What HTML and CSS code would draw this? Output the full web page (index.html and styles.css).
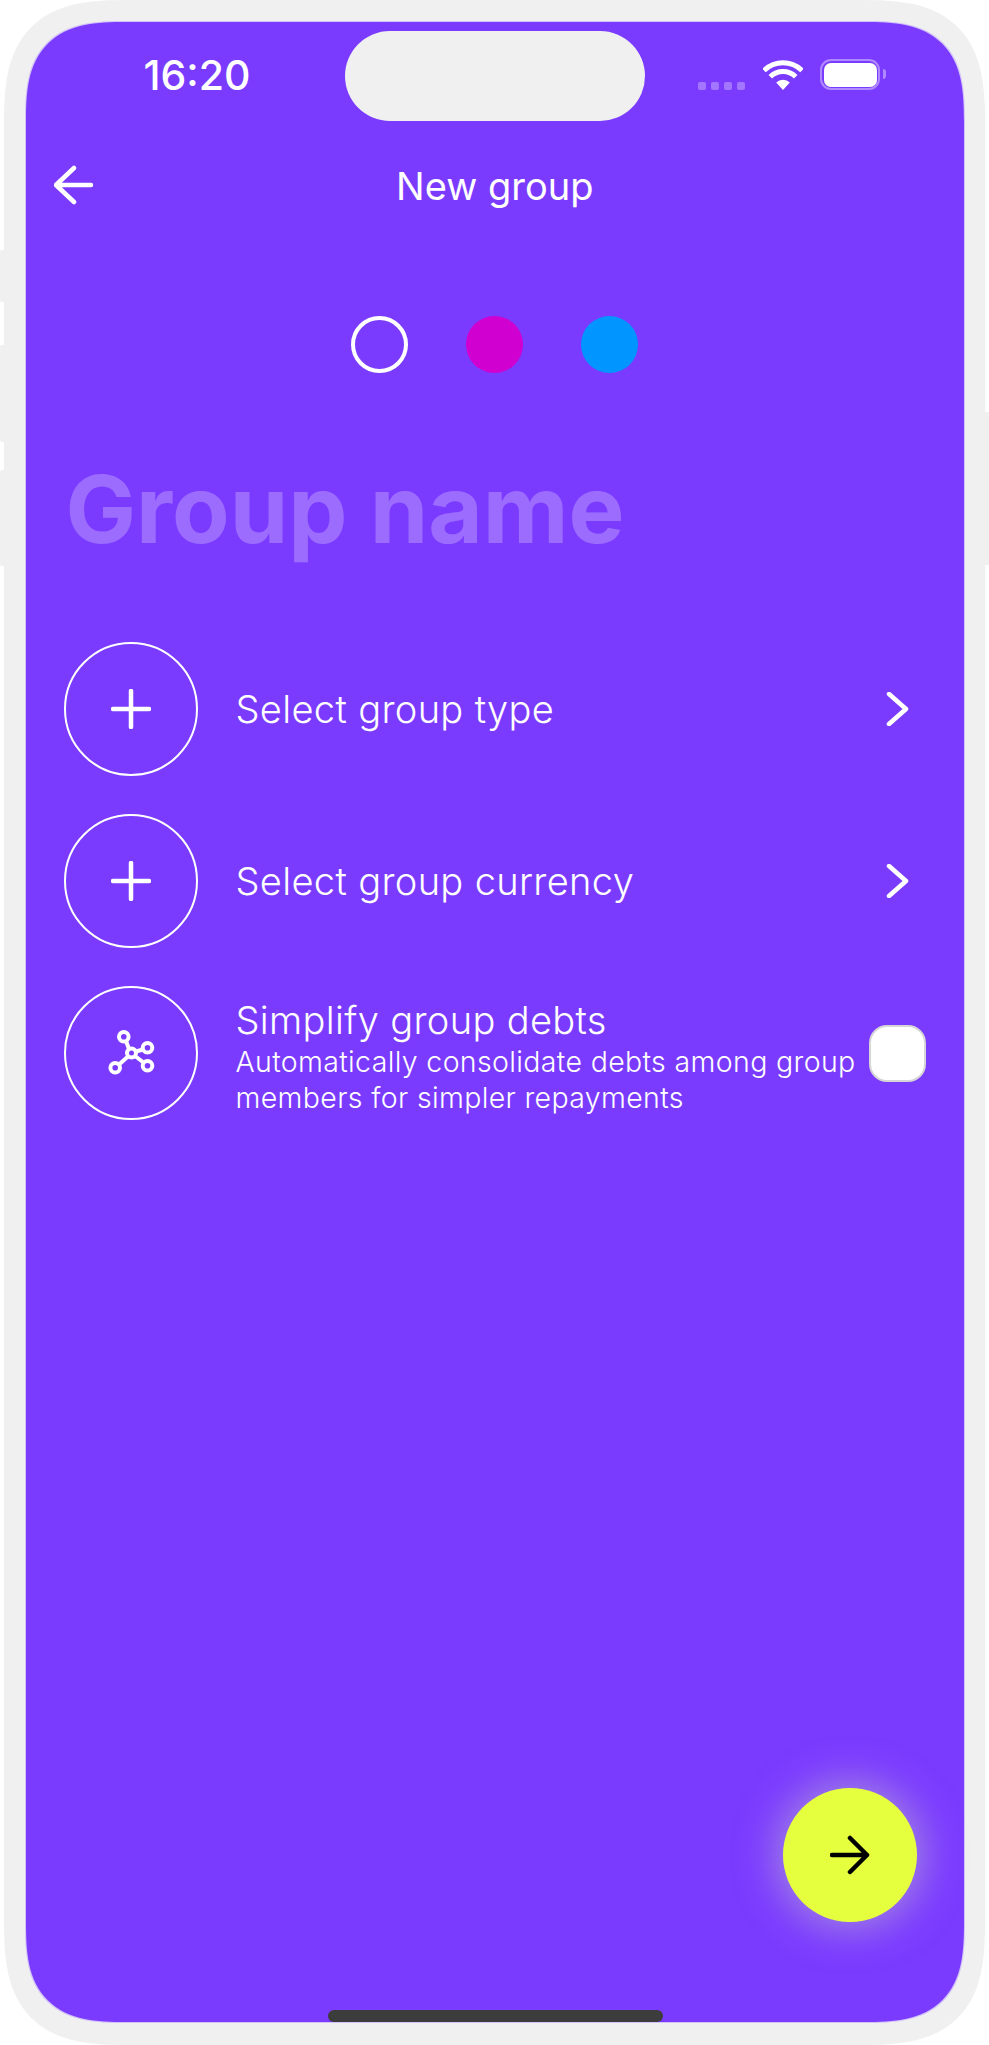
FILE: index.html
```html
<!DOCTYPE html>
<html lang="en">

<head>
  <meta charset="UTF-8" />
  <meta name="viewport" content="width=device-width, initial-scale=1" />
  <title>New group</title>
  <link rel="stylesheet" href="styles.css">
</head>

<body>
  <div class="phone">
    <span class="side-btn btn-mute"></span>
    <span class="side-btn btn-up"></span>
    <span class="side-btn btn-down"></span>
    <span class="side-btn btn-power"></span>

    <div class="screen">
      <div class="status-bar">
        <span class="time">16:20</span>
        <div class="island"></div>
        <div class="status-icons">
          <div class="signal"><i></i><i></i><i></i><i></i></div>
          <svg class="wifi" viewBox="0 0 40 31" fill="none">
            <path d="M1 11.5A27 27 0 0 1 39 11.5M7.3 17.8A18 18 0 0 1 32.7 17.8" stroke="#fff" stroke-width="5" />
            <path d="M20 31L13.2 23.6A9.6 9.6 0 0 1 26.8 23.6Z" fill="#fff" />
          </svg>
          <div class="battery"><div class="battery-level"></div></div>
        </div>
      </div>

      <div class="header">
        <svg class="back" viewBox="0 0 40 40" fill="none">
          <path d="M2 20H37M20 3L2 20L20 37" stroke="#fff" stroke-width="4.5" stroke-linecap="round" stroke-linejoin="round" />
        </svg>
        <h1>New group</h1>
      </div>

      <div class="colors">
        <span class="color color-selected"></span>
        <span class="color color-magenta"></span>
        <span class="color color-blue"></span>
      </div>

      <div class="group-name">Group name</div>

      <div class="rows">
        <div class="row">
          <div class="row-icon">
            <svg class="plus" viewBox="0 0 40 40" fill="none">
              <path d="M20 2V38M2 20H38" stroke="#fff" stroke-width="4.5" stroke-linecap="round" />
            </svg>
          </div>
          <div class="row-title">Select group type</div>
          <svg class="chevron" viewBox="0 0 24 34" fill="none">
            <path d="M3 2L20 17L3 32" stroke="#fff" stroke-width="4.5" stroke-linecap="round" stroke-linejoin="round" />
          </svg>
        </div>

        <div class="row">
          <div class="row-icon">
            <svg class="plus" viewBox="0 0 40 40" fill="none">
              <path d="M20 2V38M2 20H38" stroke="#fff" stroke-width="4.5" stroke-linecap="round" />
            </svg>
          </div>
          <div class="row-title">Select group currency</div>
          <svg class="chevron" viewBox="0 0 24 34" fill="none">
            <path d="M3 2L20 17L3 32" stroke="#fff" stroke-width="4.5" stroke-linecap="round" stroke-linejoin="round" />
          </svg>
        </div>

        <div class="row">
          <div class="row-icon">
            <svg class="network" viewBox="0 0 50 50" fill="none" stroke="#fff" stroke-width="4">
              <circle cx="25.5" cy="25" r="4.5" />
              <circle cx="17.8" cy="8.7" r="4.8" />
              <circle cx="41.5" cy="19.7" r="4.8" />
              <circle cx="41.5" cy="37.7" r="4.8" />
              <circle cx="9.2" cy="39.7" r="4.8" />
              <path d="M20 13L23 21M30 23.5L37 21.5M29 28L37.5 34.5M22 28.5L13 36.5" />
            </svg>
          </div>
          <div class="row-body">
            <div class="row-title">Simplify group debts</div>
            <div class="row-sub">Automatically consolidate debts among group<br>members for simpler repayments</div>
          </div>
          <div class="checkbox"></div>
        </div>
      </div>

      <div class="spacer"></div>

      <div class="footer">
        <div class="fab">
          <svg class="fab-arrow" viewBox="0 0 40 40" fill="none">
            <path d="M2 20H37M20 3L37 20L20 37" stroke="#000" stroke-width="4.5" stroke-linecap="round" stroke-linejoin="round" />
          </svg>
        </div>
      </div>

      <div class="home-indicator"></div>
    </div>
  </div>
</body>

</html>
```

FILE: styles.css
```css
* {
  margin: 0;
  padding: 0;
  box-sizing: border-box;
}

body {
  font-family: 'Inter', sans-serif;
  background-color: #fff;
  color: #fff;
  width: 989px;
  height: 2045px;
  padding: 0 4px;
  overflow: hidden;
}

.phone {
  position: relative;
  width: 981px;
  height: 2045px;
  padding: 22px 21px 23px 21.5px;
  background-color: #f0f0f0;
  border-radius: 125px;
  corner-shape: superellipse(1.5);
}

.side-btn {
  position: absolute;
  width: 6px;
  background-color: #f0f0f0;
  border-radius: 2px;
}

.btn-mute { left: -4px; top: 250px; height: 52px; }
.btn-up { left: -4px; top: 345px; height: 97px; }
.btn-down { left: -4px; top: 470px; height: 96px; }
.btn-power { right: -4px; top: 412px; height: 153px; }

.screen {
  position: relative;
  display: flex;
  flex-direction: column;
  height: 100%;
  background-color: #7b3bff;
  border-radius: 100px;
  corner-shape: superellipse(1.5);
  box-shadow: 0 0 0 1px rgba(190, 165, 255, 0.6);
}

.status-bar {
  display: flex;
  align-items: flex-start;
  height: 99px;
  padding-top: 9px;
}

.time {
  width: 319.5px;
  padding: 21px 0 0 118px;
  font-size: 41px;
  line-height: 47px;
  font-weight: 500;
}

.island {
  width: 300px;
  height: 90px;
  background-color: #f0f0f0;
  border-radius: 45px;
}

.status-icons {
  display: flex;
  align-items: flex-start;
  margin-left: 53px;
  padding-top: 28px;
}

.signal {
  display: flex;
  gap: 5px;
  margin-top: 23px;
  margin-right: 18px;
}

.signal i {
  display: block;
  width: 8px;
  height: 8px;
  border-radius: 2px;
  background-color: rgba(255, 255, 255, 0.3);
}

.wifi {
  width: 40px;
  height: 31px;
  margin-right: 17px;
}

.battery {
  position: relative;
  width: 60px;
  height: 31px;
  padding: 1.5px;
  border: 2.5px solid rgba(255, 255, 255, 0.4);
  border-radius: 11px;
}

.battery::after {
  content: '';
  position: absolute;
  right: -8px;
  top: 8px;
  width: 3px;
  height: 10px;
  background-color: rgba(255, 255, 255, 0.4);
  border-radius: 0 3px 3px 0;
}

.battery-level {
  height: 100%;
  background-color: #fff;
  border-radius: 7px;
}

.header {
  position: relative;
  height: 63px;
  margin-top: 34px;
  display: flex;
  align-items: center;
  justify-content: center;
}

.back {
  position: absolute;
  left: 28px;
  top: 10px;
  width: 40px;
  height: 40px;
}

.header h1 {
  font-size: 38px;
  line-height: 63px;
  font-weight: 400;
}

.colors {
  display: flex;
  justify-content: center;
  gap: 58px;
  margin-top: 98px;
}

.color {
  width: 57px;
  height: 57px;
  border-radius: 50%;
}

.color-selected { border: 4px solid #fff; }
.color-magenta { background-color: #d000d0; }
.color-blue { background-color: #0095ff; }

.group-name {
  margin-top: 83px;
  padding-left: 40px;
  font-size: 94px;
  line-height: 107px;
  font-weight: 700;
  color: rgba(255, 255, 255, 0.25);
}

.rows {
  display: flex;
  flex-direction: column;
  gap: 38px;
  margin-top: 79px;
  padding: 0 38px;
}

.row {
  display: flex;
  align-items: center;
  gap: 38px;
}

.row-icon {
  flex: none;
  width: 134px;
  height: 134px;
  border: 2px solid #fff;
  border-radius: 50%;
  display: flex;
  align-items: center;
  justify-content: center;
}

.plus {
  width: 40px;
  height: 40px;
}

.network {
  width: 50px;
  height: 50px;
}

.row-title {
  flex: 1;
  font-size: 38px;
  line-height: 48px;
  letter-spacing: 0.35px;
  font-weight: 350;
}

.row-body {
  flex: 1;
  min-width: 0;
  padding-top: 6px;
}

.row-sub {
  font-size: 28.5px;
  line-height: 36px;
  letter-spacing: 0.35px;
  font-weight: 350;
  white-space: nowrap;
}

.chevron {
  flex: none;
  width: 24px;
  height: 34px;
  margin-right: 16px;
}

.checkbox {
  flex: none;
  width: 57px;
  height: 57px;
  background-color: #fff;
  border: 2px solid #d6d6d6;
  border-radius: 18px;
}

.spacer {
  flex: 1;
}

.footer {
  display: flex;
  justify-content: flex-end;
  padding-right: 47px;
  margin-bottom: 100px;
}

.fab {
  width: 134px;
  height: 134px;
  border-radius: 50%;
  background-color: #e5ff3f;
  box-shadow: 0 0 40px 6px rgba(200, 200, 200, 0.55);
  display: flex;
  align-items: center;
  justify-content: center;
}

.fab-arrow {
  width: 40px;
  height: 40px;
}

.home-indicator {
  position: absolute;
  left: 302px;
  bottom: 0;
  width: 335px;
  height: 12px;
  background-color: #3c3c3c;
  border-radius: 6px;
}
```
